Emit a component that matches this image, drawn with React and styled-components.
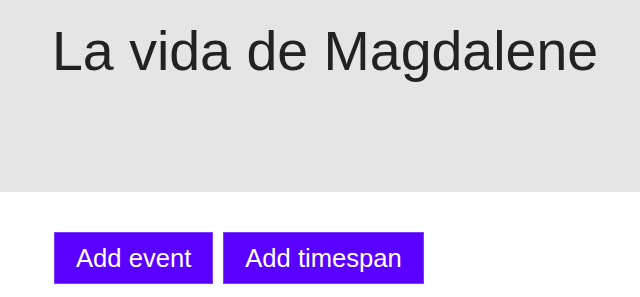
import React from "react";
import styled, { createGlobalStyle } from "styled-components";

const GlobalStyle = createGlobalStyle`
  html, body {
    margin: 0;
    padding: 0;
    background: #ffffff;
    font-family: "Liberation Sans", Arial, sans-serif;
  }
`;

function App() {
  return (
    <>
      <GlobalStyle />
      <StyledPage>
        <StyledHeader>
          <StyledTitle>La vida de Magdalene</StyledTitle>
        </StyledHeader>
        <StyledToolbar>
          <StyledButton>Add event</StyledButton>
          <StyledButton>Add timespan</StyledButton>
        </StyledToolbar>
      </StyledPage>
    </>
  );
}

export default App;

const StyledPage = styled.div`
  width: 640px;
`;

const StyledHeader = styled.header`
  box-sizing: border-box;
  height: 192px;
  background: #e5e5e5;
  padding: 19px 0 0 52px;
`;

const StyledTitle = styled.h1`
  margin: 0;
  font-size: 55.5px;
  line-height: 64px;
  font-weight: normal;
  color: #222222;
`;

const StyledToolbar = styled.div`
  display: flex;
  gap: 10px;
  padding: 40px 0 0 54px;
`;

const StyledButton = styled.button`
  box-sizing: border-box;
  height: 52px;
  padding: 0 21px;
  background: #5a00ff;
  border: 1px solid #7a3cff;
  border-radius: 0;
  color: #ffffff;
  font-family: "Liberation Sans", Arial, sans-serif;
  font-size: 25.6px;
  cursor: pointer;
`;
